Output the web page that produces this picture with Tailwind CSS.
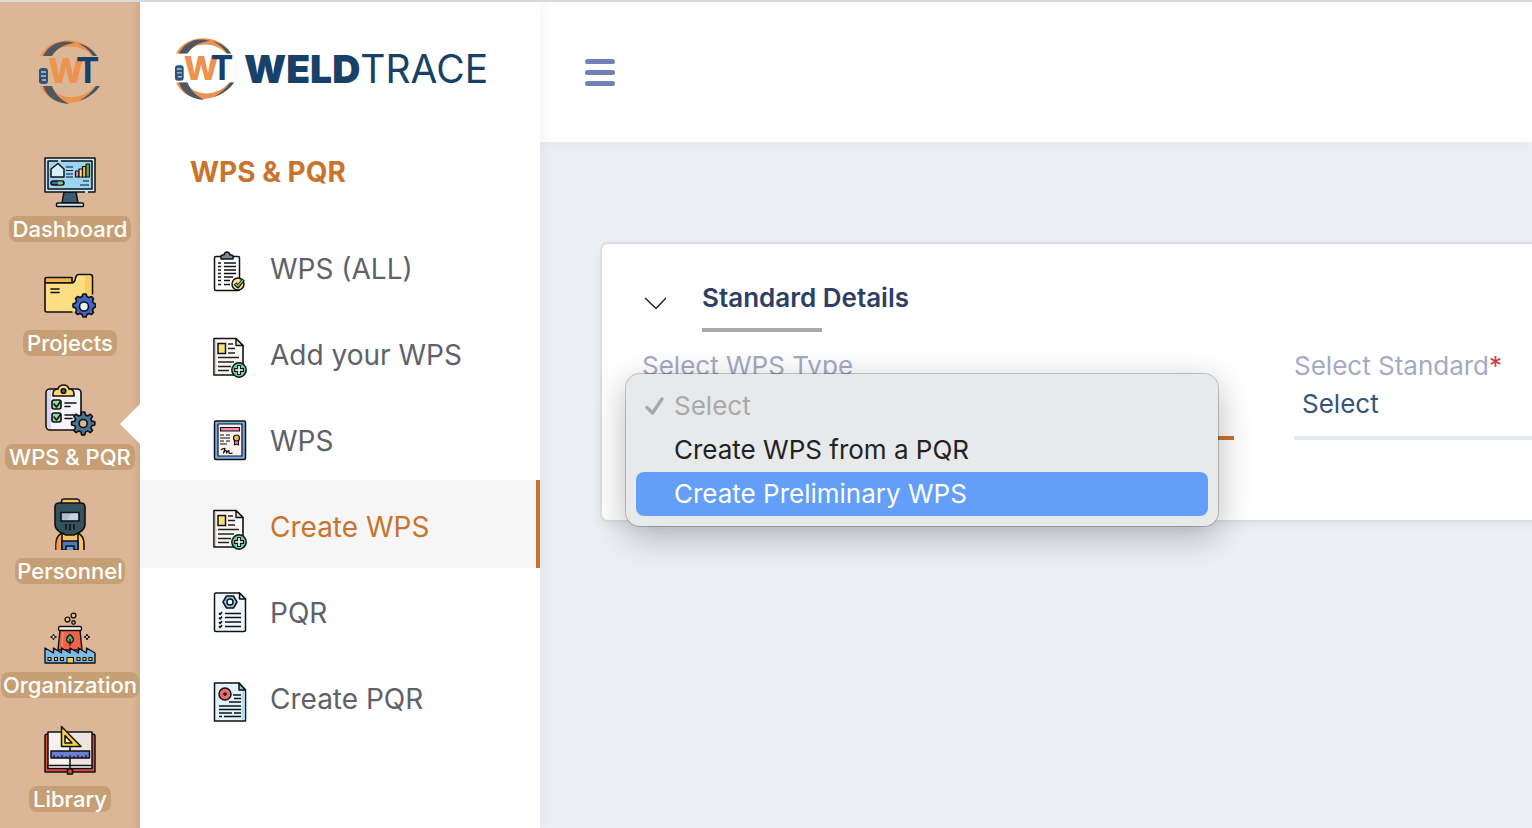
<!DOCTYPE html>
<html lang="en">
<head>
  <meta charset="UTF-8">
  <meta name="viewport" content="width=device-width, initial-scale=1.0">
  <title>WeldTrace - Create WPS</title>
  <script src="https://cdn.jsdelivr.net/npm/@tailwindcss/browser@4"></script>
</head>
<body class="bg-[#eceff4] font-['Inter',sans-serif] overflow-x-hidden">
  <!-- shared symbols -->
  <svg class="hidden">
    <symbol id="wt-logo" viewBox="0 0 64 64">
      <path d="M2 16C12 -4 46 -6 59 16L54 16C43 4 22 3 12 16Z" fill="#ee924f"/>
      <path d="M5 16C12 3 24 -1 37 3C26 4 18 9 14 16Z" fill="#505761"/>
      <path d="M40 3C50 6 55 10 59 16L55 16C51 10 47 7 40 3Z" fill="#3c5a64"/>
      <path d="M2 46C12 68 46 69 62 46L57 46C44 61 22 61 12 46Z" fill="#ee924f"/>
      <path d="M5 46C10 59 19 63 31 64C22 59 17 54 14 46Z" fill="#505761"/>
      <path d="M41 61C50 58 57 53 62 46L58 46C54 52 48 57 41 61Z" fill="#3c5a64"/>
      <rect x="1" y="28" width="9" height="16" rx="3" fill="#2d557b"/>
      <path d="M3 32H8M3 36H8M4 40H8" stroke="#b9c3cf" stroke-width="1.5"/>
      <text x="10" y="43" font-family="Inter, sans-serif" font-size="34" font-weight="800" fill="#ee924f">W</text>
      <text x="38" y="43" font-family="Inter, sans-serif" font-size="35" font-weight="700" fill="#174168">T</text>
    </symbol>
    <symbol id="doc-plus" viewBox="1 0 40 44">
      <path d="M5 4.5H27L34 11.5V41H5Z" fill="#fbf8f4" stroke="#111" stroke-width="1.6" stroke-linejoin="round"/>
      <path d="M6.5 5.5V40" stroke="#d8d2cd" stroke-width="1.5"/>
      <path d="M27 4.5V11.5H34Z" fill="#e6dcd6" stroke="#111" stroke-width="1.4" stroke-linejoin="round"/>
      <rect x="9" y="9.5" width="7.5" height="10" fill="#fbdf73" stroke="#111" stroke-width="1.5"/>
      <path d="M19 10H24M19 14.5H26M19 19H26M9 23.5H30M9 28H25M9 32.5H22M9 36.5H20" stroke="#222" stroke-width="1.5"/>
      <circle cx="30" cy="36" r="7.2" fill="#63cda9" stroke="#111" stroke-width="1.5"/>
      <path d="M28.6 31.5H31.4V34.6H34.5V37.4H31.4V40.5H28.6V37.4H25.5V34.6H28.6Z" fill="#fff" stroke="#111" stroke-width="1.1"/>
    </symbol>
  </svg>

  <div class="min-h-screen flex border-t-2 border-[#d9dadd]">

    <!-- Icon rail -->
    <nav class="relative z-20 w-[140px] shrink-0 bg-[#dcb797] flex flex-col items-center pt-[38px] shadow-[inset_-8px_0_8px_-6px_rgba(120,80,40,0.15)]">
      <svg class="size-16 shrink-0 mb-[52px]"><use href="#wt-logo"/></svg>
      <ul class="flex flex-col items-center gap-7 text-[22px] leading-[26px] font-medium text-white">
        <li>
          <a href="#" class="flex flex-col items-center gap-2">
            <svg class="size-[52px]" viewBox="0 0 52 52" fill="none" stroke="#111" stroke-width="1.5" stroke-linejoin="round">
              <path d="M20 36H32L34 47H18Z" fill="#3f5b74"/>
              <rect x="1" y="2" width="50" height="34" fill="#d3e9f8"/>
              <rect x="4" y="5" width="44" height="28" fill="#9bd5f6"/>
              <path d="M7 13L14 7.5L20 13V21H7Z" fill="#d8edfb"/>
              <path d="M22 11H29M22 14.5H29M22 18H29M22 21H29M39 25H45M36 29H45" stroke-width="1.2"/>
              <g stroke-width="1.2">
                <path d="M31.500 21V15H35V21Z" fill="#e889ad"/>
                <path d="M35 21V13H38.500V21Z" fill="#fbdf73"/>
                <path d="M38.500 21V10.500H42V21Z" fill="#f5b95c"/>
                <path d="M42 21V8H45.500V21Z" fill="#77a94a"/>
              </g>
              <rect x="7" y="25" width="13" height="4" rx="2" fill="#3d6ab0"/>
              <path d="M14 25.500H18L19 27L18 28.500H14Z" fill="#9acb4c" stroke="none"/>
              <rect x="12.500" y="47" width="27" height="3.500" rx="1" fill="#d3e9f8"/>
              <path d="M14 5H17M41 36H44" stroke="#fff"/>
            </svg>
            <span class="rounded-lg bg-[#c79f75] px-1">Dashboard</span>
          </a>
        </li>
        <li>
          <a href="#" class="flex flex-col items-center gap-2">
            <svg class="size-[52px]" viewBox="0 0 52 52" fill="none" stroke="#111" stroke-width="1.6" stroke-linejoin="round" stroke-linecap="round">
              <path d="M1 12V9Q1 7.5 3 7.5H28V13H1Z" fill="#f3b54f"/>
              <path d="M28 42H3Q1 42 1 40V13H28Q30 13 31 10L32 6.5Q32.500 4.500 35 4.500H46Q48.500 4.500 48.500 7V24V36H40V42Z" fill="#fcde85" stroke="none"/>
              <path d="M47.500 6V26H41V6Z" fill="#f8cd68" stroke="none"/>
              <path d="M28 42H3Q1 42 1 40V13H28Q30 13 31 10L32 6.5Q32.500 4.500 35 4.500H46Q48.500 4.500 48.500 7V24"/>
              <path d="M7 19H15M7 22.500H15"/>
              <path d="M38 26.500l1-2.500h3l1 2.500 2 1 2.500-1 2 2-1 2.500 1 2 2 1v3l-2 1-1 2 1 2.500-2 2-2.500-1-2 1-1 2.500h-3l-1-2.500-2-1-2.500 1-2-2 1-2.500-1-2-2.500-1v-3l2.500-1 1-2-1-2.500 2-2 2.500 1z" fill="#3f66c4"/>
              <circle cx="40" cy="36.500" r="4.500" fill="#e8f2fb"/>
            </svg>
            <span class="rounded-lg bg-[#c79f75] px-1">Projects</span>
          </a>
        </li>
        <li>
          <a href="#" class="flex flex-col items-center gap-2">
            <svg class="size-[52px]" viewBox="0 0 52 52" fill="none" stroke="#111" stroke-width="1.6" stroke-linejoin="round" stroke-linecap="round">
              <rect x="2" y="5" width="35" height="41" rx="4" fill="#f5f3fb"/>
              <path d="M3 9V42Q4 45 7 45V6Q4 6 3 9Z" fill="#d8d3ea" stroke="none"/>
              <path d="M9 10Q9 5 14 5Q15 1 19.500 1Q24 1 25 5Q30 5 30 10V12H9Z" fill="#fbd775"/>
              <circle cx="19.500" cy="7" r="2.300" fill="#3d6687"/>
              <rect x="8" y="16" width="9" height="9" rx="2" fill="#8fdc9c"/>
              <rect x="8" y="29" width="9" height="9" rx="2" fill="#8fdc9c"/>
              <path d="M10 20L12.500 23L16.500 17.500M10 33L12.500 36L16.500 30.500M21 19H32M21 22.500H26M21 31H32M21 34.500H28"/>
              <path d="M37 31l.6-3h3.200l.8 3 2 1 2.700-1.800 2.200 2.300-1.700 2.600 1 2 3 .7v3.200l-3 .8-1 2 1.700 2.600-2.200 2.200-2.700-1.700-2 1-.8 3h-3.200l-.6-3-2.200-1-2.700 1.700-2.200-2.200 1.700-2.600-1-2-3-.8v-3.200l3-.7 1-2-1.700-2.600 2.200-2.300 2.700 1.800z" fill="#477496"/>
              <circle cx="39.200" cy="39.500" r="4" fill="#dcb797"/>
            </svg>
            <span class="rounded-lg bg-[#c79f75] px-1 whitespace-nowrap">WPS &amp; PQR</span>
          </a>
        </li>
        <li>
          <a href="#" class="flex flex-col items-center gap-2">
            <svg class="size-[52px]" viewBox="0 0 52 52" fill="none" stroke="#111" stroke-width="1.6" stroke-linejoin="round">
              <path d="M12 52V46Q12 38 18 35H34Q40 38 40 46V52" fill="#fcc468"/>
              <path d="M12.500 52V46Q13 40 17 38V52Z" fill="#f59c4c" stroke="none"/>
              <path d="M18 52V36M34 52V36"/>
              <path d="M18 43H34V52H18Z" fill="#4a7ec0"/>
              <path d="M22 52V48H30V52" fill="#6da0d8"/>
              <path d="M16 8L18 2Q18 1 20 1H33Q35 1 35.500 3L36 8Z" fill="#fbc15c"/>
              <path d="M11 9Q11 5 15 5H37Q41 5 41 9V26Q41 31 36 34L30 37H22L16 34Q11 31 11 26Z" fill="#34515d"/>
              <rect x="17" y="14.500" width="18" height="8.500" fill="#a9bdd6"/>
              <path d="M23 22L27 15.500H34V22Z" fill="#c3d2e4" stroke="none"/>
              <path d="M22 26.500V31M26 26.500V32M30 26.500V31" stroke-linecap="round"/>
            </svg>
            <span class="rounded-lg bg-[#c79f75] px-0.5">Personnel</span>
          </a>
        </li>
        <li>
          <a href="#" class="flex flex-col items-center gap-2">
            <svg class="size-[52px]" viewBox="0 0 52 52" fill="none" stroke="#111" stroke-width="1.4" stroke-linejoin="round">
              <circle cx="29.500" cy="3.500" r="2.400" fill="#f6c944"/>
              <circle cx="23.500" cy="7.500" r="2.400" fill="#f6c944"/>
              <circle cx="29.500" cy="10.500" r="1.700" fill="#f6c944"/>
              <path d="M16 18H36L38 38H14Z" fill="#ee6249"/>
              <path d="M19 20L18 34" stroke="#f58a72"/>
              <rect x="14.500" y="14.500" width="23" height="4" rx="1.500" fill="#fdf3ee"/>
              <path d="M26 22.500Q33 28 26 31.500Q19 28 26 22.500ZM26 27V34" fill="#4eaf67" stroke-width="1.1"/>
              <path d="M9.500 22l.8 2.200 2.200.8-2.200.8-.8 2.200-.8-2.200-2.200-.8 2.200-.8zM43 22l.8 2.200 2.200.8-2.200.8-.8 2.200-.8-2.200-2.200-.8 2.200-.8z" fill="#f8e9cf" stroke-width="1"/>
              <path d="M1 51V36L9.500 41V36L17.500 41V36L26 41V36L34.500 41V36L42.500 41V36L51 41V51Z" fill="#7cbbe5"/>
              <path d="M4 45.500h3v3h-3zM10.500 45.500h3v3h-3zM16.500 45.500h3v3h-3zM33 45.500h3v3h-3zM39 45.500h3v3h-3zM45 45.500h3v3h-3zM23 45.500h6.500v5.500h-6.500z" fill="#f6c944" stroke-width="1.1"/>
            </svg>
            <span class="rounded-lg bg-[#c79f75] px-0.5">Organization</span>
          </a>
        </li>
        <li>
          <a href="#" class="flex flex-col items-center gap-2">
            <svg class="size-[52px] overflow-visible" viewBox="0 0 52 52" fill="none" stroke="#111" stroke-width="1.5" stroke-linejoin="round">
              <path d="M1 10Q1 8 4 8H48Q51 8 51 10V46H1Z" fill="#e5483f"/>
              <path d="M4 6H48V42H4Z" fill="#f6f2f0"/>
              <path d="M26 7H47V40H26Z" fill="#efe3e0" stroke="none"/>
              <path d="M4 39.500H48V42.500H4Z" fill="#fff"/>
              <path d="M26 18V46"/>
              <rect x="23.500" y="43" width="5" height="5" fill="#e5483f"/>
              <path d="M17.500 0.500L37 20.500H17.500Z" fill="#f8d33c"/>
              <path d="M21 9.500L28 17H21Z" fill="#fff"/>
              <rect x="7" y="25" width="38.500" height="7" fill="#6d7fd0"/>
              <path d="M10 32v-3M14 32v-2M18 32v-3M22 32v-2M26 32v-3M30 32v-2M34 32v-3M38 32v-2M42 32v-3" stroke-width="1.2"/>
            </svg>
            <span class="rounded-lg bg-[#c79f75] px-1">Library</span>
          </a>
        </li>
      </ul>
      <!-- pointer of the current section -->
      <span class="absolute right-0 top-[402px] w-5 h-10 bg-white [clip-path:polygon(100%_0,0_50%,100%_100%)]"></span>
    </nav>

    <!-- Section menu -->
    <aside class="relative z-10 w-[400px] shrink-0 bg-white shadow-[2px_4px_14px_rgba(0,0,0,0.06)]">
      <a href="#" class="flex items-center gap-2 pl-[34px] pt-9 text-[39px] leading-[62px] text-[#174168]">
        <svg class="size-[62px] shrink-0"><use href="#wt-logo"/></svg>
        <span class="whitespace-nowrap"><span class="font-black">WELD</span><span class="font-normal">TRACE</span></span>
      </a>
      <h2 class="pl-[50px] pt-14 pb-[34px] text-[28px] leading-8 font-bold text-[#c9742c]">WPS &amp; PQR</h2>
      <ul class="text-[28px] leading-10 text-[#5f6169]">
        <li class="h-[88px] -mb-0.5">
          <a href="#" class="flex items-center gap-5 h-full pl-[70px] pt-2">
            <svg class="w-10 h-11" viewBox="0 0 40 44" fill="none" stroke="#111" stroke-width="1.5" stroke-linejoin="round">
              <rect x="4.500" y="8.500" width="25" height="34" rx="1.500" fill="#fdfdfd"/>
              <path d="M11 11V8Q11 7 13 7H14Q14.500 4 17 4Q19.500 4 20 7H21Q23 7 23 8V11Z" fill="#7d8896"/>
              <path d="M8 15H11M14 15H26M8 18.500H11M14 18.500H26M8 22H11M14 22H26M8 25.500H11M14 25.500H26M8 29H11M14 29H23M8 32.500H11M14 32.500H20M8 36.500H11M14 36.500H20" stroke-width="1.3"/>
              <circle cx="28" cy="36" r="6" fill="#fbe58f"/>
              <path d="M25 35.500L28 38.500L33.500 31.500" stroke-width="3.6"/>
              <path d="M25.300 35.800L28 38L33 32" stroke="#7dcf6c" stroke-width="1.4"/>
            </svg>
            <span class="pb-0.5">WPS (ALL)</span>
          </a>
        </li>
        <li class="h-[88px] -mb-0.5">
          <a href="#" class="flex items-center gap-5 h-full pl-[70px] pt-2">
            <svg class="w-10 h-11"><use href="#doc-plus"/></svg>
            <span class="pb-0.5">Add your WPS</span>
          </a>
        </li>
        <li class="h-[88px] -mb-0.5">
          <a href="#" class="flex items-center gap-5 h-full pl-[70px] pt-2">
            <svg class="w-10 h-11" viewBox="0 0 40 44" fill="none" stroke="#111" stroke-width="1.5" stroke-linejoin="round">
              <rect x="4.500" y="1" width="31" height="38.500" rx="1.500" fill="#78ace6"/>
              <rect x="8" y="4" width="24" height="32" fill="#f9f1ef" stroke-width="1.2"/>
              <rect x="10.500" y="7.500" width="19" height="3.500" fill="#ee8bb0" stroke-width="1.1"/>
              <path d="M10 15H14M16 15H20M10 18H20M10 21H14M16 21H20M10 24H17" stroke-width="1.2"/>
              <path d="M24.500 20V25L26.500 24L28.500 25V20Z" fill="#ee8bb0" stroke-width="1.1"/>
              <circle cx="26.500" cy="18" r="3" fill="#f8b64c" stroke-width="1.2"/>
              <path d="M11 30Q13 28 15 28.500L13.500 33Q15 29.500 16.500 31V33Q18 30 19 31V33Q20 34 22.500 33" stroke-width="1.2"/>
            </svg>
            <span class="pb-0.5">WPS</span>
          </a>
        </li>
        <li class="h-[88px] -mb-0.5 bg-[#f6f6f6] border-r-4 border-[#c9742c] text-[#c9742c]">
          <a href="#" aria-current="page" class="flex items-center gap-5 h-full pl-[70px] pt-2">
            <svg class="w-10 h-11"><use href="#doc-plus"/></svg>
            <span class="pb-0.5">Create WPS</span>
          </a>
        </li>
        <li class="h-[88px] -mb-0.5">
          <a href="#" class="flex items-center gap-5 h-full pl-[70px] pt-2">
            <svg class="w-10 h-11" viewBox="0 0 40 44" fill="none" stroke="#111" stroke-width="1.5" stroke-linejoin="round">
              <path d="M4.500 2.500Q4.500 1 6 1H29.500L35.500 7V38Q35.500 39.500 34 39.500H6Q4.500 39.500 4.500 38Z" fill="#f1f8fd"/>
              <path d="M29.500 1V7H35.500Z" fill="#cfe7f5"/>
              <path d="M16.500 4H23.500L27 10L23.500 16H16.500L13 10Z" fill="#8bcbea"/>
              <circle cx="20" cy="10" r="3" fill="#fff"/>
              <path d="M15 21.500H31M15 25.500H31M15 30H31M15 34.500H31" stroke-width="1.3"/>
              <path d="M9 21l1.200 1.500L12 20M9 25.500l1.200 1.500L12 24.500M9 30l1.200 1.500L12 29M9 34l1.200 1.500L12 33"/>
            </svg>
            <span class="pb-0.5">PQR</span>
          </a>
        </li>
        <li class="h-[88px] -mb-0.5">
          <a href="#" class="flex items-center gap-5 h-full pl-[70px] pt-2">
            <svg class="w-10 h-11" viewBox="0 0 40 44" fill="none" stroke="#111" stroke-width="1.5" stroke-linejoin="round">
              <path d="M4.500 5H29L35.500 12V43H4.500Z" fill="#e0f4fb"/>
              <path d="M32 12H35V42H32Z" fill="#b4dcec" stroke="none"/>
              <path d="M29 5V12H35.500Z" fill="#8bc4d5"/>
              <circle cx="15" cy="16" r="6" fill="#ee6b6b"/>
              <path d="M13 16H17M15 14V18M23 17H31M24 20.500H31M19 24H31M9 28H31M9 31.500H31M9 35H22M24 35H31M9 38.500H12M14 38.500H31" stroke-width="1.3"/>
            </svg>
            <span class="pb-0.5">Create PQR</span>
          </a>
        </li>
      </ul>
    </aside>

    <div class="flex-1 min-w-0 overflow-hidden">
      <header class="h-[140px] bg-white flex items-center pl-11 shadow-[0_4px_14px_rgba(0,0,0,0.03)]">
        <button type="button" aria-label="Toggle menu" class="flex flex-col gap-1.5 w-8 px-px">
          <span class="h-[5px] rounded-sm bg-[#7280b8]"></span>
          <span class="h-[5px] rounded-sm bg-[#7280b8]"></span>
          <span class="h-[5px] rounded-sm bg-[#7280b8]"></span>
        </button>
      </header>

      <main class="pl-[60px] pt-[100px]">
        <section class="w-max rounded-lg border-2 border-[#dddee0] bg-white px-10 pt-[38px] pb-20 text-[26px] leading-8 shadow-[0_4px_12px_rgba(0,0,0,0.05)]">
          <div class="flex items-start gap-9">
            <svg class="w-6 h-4 mt-3.5" viewBox="0 0 24 16" fill="none" stroke="#222" stroke-width="1.5"><path d="M3 2L14 12.500L24 2"/></svg>
            <h3 class="text-[#2f3e66] font-semibold">Standard Details
              <span class="block mt-3.5 w-[120px] h-1 bg-[#a8a8a8]"></span>
            </h3>
          </div>

          <form class="mt-[18px] grid grid-cols-[592px_592px] gap-15">
            <div class="relative">
              <label for="wps-type" class="block text-[#a5aac5]">Select WPS Type</label>
              <select id="wps-type" class="block appearance-none w-full h-[58px] pl-2 pb-2.5 border-b-4 border-[#c9742c] text-[#34547a]">
                <option>Select</option>
              </select>
              <!-- opened list -->
              <ul role="listbox" class="absolute -left-4 top-6 w-[592px] rounded-[14px] bg-[#e8e9ea] p-2.5 leading-[44px] text-[#222] shadow-[0_0_0_1px_rgba(0,0,0,0.2),0_10px_36px_rgba(0,0,0,0.28)]">
                <li role="option" aria-selected="true" class="flex items-center pl-2 text-[#a9a9aa]">
                  <svg class="w-[30px] h-6" viewBox="0 0 30 24" fill="none" stroke="#a9a9aa" stroke-width="3.5" stroke-linecap="round" stroke-linejoin="round"><path d="M3 13.500L8.500 19L18 5"/></svg>
                  Select
                </li>
                <li role="option" class="pl-[38px]">Create WPS from a PQR</li>
                <li role="option" class="pl-[38px] rounded-lg bg-[#639ff9] text-white">Create Preliminary WPS</li>
              </ul>
            </div>
            <div>
              <label for="standard" class="block text-[#a5aac5]">Select Standard<span class="text-[#d03b42]">*</span></label>
              <select id="standard" class="block appearance-none w-full h-[58px] pl-2 pb-2.5 border-b-4 border-[#e6e9f0] text-[#34547a]">
                <option>Select</option>
              </select>
            </div>
          </form>
        </section>
      </main>
    </div>
  </div>
</body>
</html>
